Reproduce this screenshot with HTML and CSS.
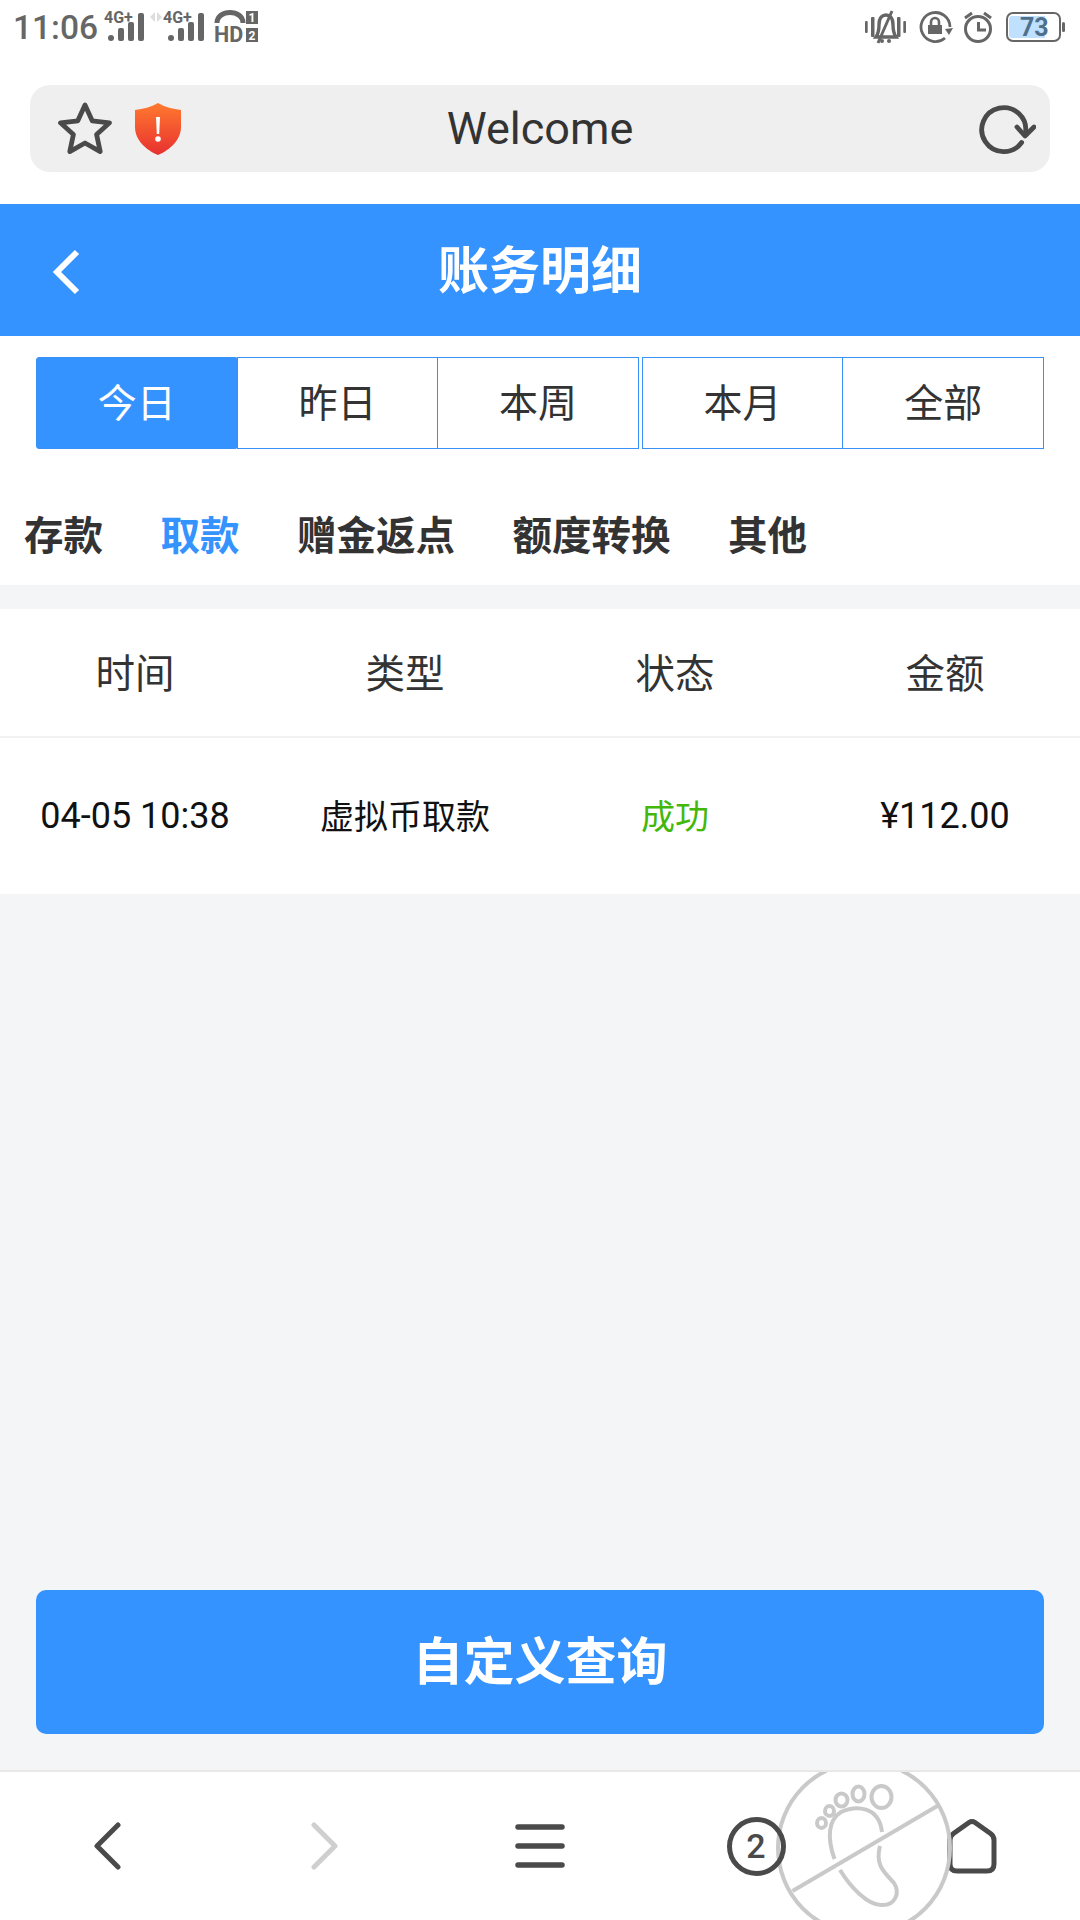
FILE: index.html
```html
<!DOCTYPE html>
<html lang="zh-CN">
<head>
<meta charset="utf-8">
<title>账务明细</title>
<link rel="stylesheet" href="styles.css">
</head>
<body>
<div class="phone">
  <div class="status">
    <div class="status-left">
      <span class="time">11:06</span>
      <svg class="ic ic-net" width="40" height="32" viewBox="0 0 40 32">
        <text x="0" y="13" class="net-t">4G+</text>
        <rect x="4" y="25" width="6" height="6" rx="3" class="g"/>
        <rect x="14" y="18" width="6" height="13" rx="2" class="g"/>
        <rect x="24" y="12" width="6" height="19" rx="2" class="g"/>
        <rect x="34" y="3" width="6" height="28" rx="2" class="g"/>
      </svg>
      <svg class="ic ic-net2" width="54" height="32" viewBox="0 0 54 32">
        <path d="M5 2 L0 7 L5 12Z M7 2 L12 7 L7 12Z" fill="#ddd"/>
        <text x="13" y="13" class="net-t">4G+</text>
        <rect x="18" y="25" width="6" height="6" rx="3" class="g"/>
        <rect x="28" y="18" width="6" height="13" rx="2" class="g"/>
        <rect x="38" y="12" width="6" height="19" rx="2" class="g"/>
        <rect x="48" y="3" width="6" height="28" rx="2" class="g"/>
      </svg>
      <svg class="ic" width="44" height="33" viewBox="0 0 44 33">
        <path d="M2 13 C2 -1 28 -1 28 13" fill="none" stroke="#666" stroke-width="5"/>
        <text x="-1" y="32" class="hd-t">HD</text>
        <rect x="31" y="1" width="12" height="13" class="g"/>
        <rect x="31" y="18" width="12" height="14" class="g"/>
        <text x="37" y="12" class="sim-t">1</text>
        <text x="37" y="30" class="sim-t">2</text>
      </svg>
    </div>
    <div class="status-right">
      <svg width="42" height="34" viewBox="0 0 42 34">
        <rect x="0" y="11" width="2.7" height="12" rx="1" class="g"/>
        <rect x="6" y="7" width="3.5" height="20" rx="1" class="g"/>
        <rect x="32" y="7" width="3.5" height="20" rx="1" class="g"/>
        <rect x="38.3" y="11" width="2.7" height="12" rx="1" class="g"/>
        <path d="M11 27 C13 24 14 20 14 15 C14 7 18 5 21 5 C24 5 28 7 28 15 C28 20 29 24 31 27Z" fill="none" stroke="#666" stroke-width="3.4"/>
        <path d="M13 33 L27 1" stroke="#666" stroke-width="3"/>
        <circle cx="17" cy="31" r="2" class="g"/><circle cx="24" cy="31" r="2" class="g"/>
      </svg>
      <svg width="34" height="34" viewBox="0 0 34 34">
        <path d="M26 28 A14.5 14.5 0 1 1 31 17" fill="none" stroke="#666" stroke-width="2.8"/>
        <path d="M26 19 L34 18 L30 25Z" fill="#666"/>
        <rect x="9" y="15" width="14" height="9" class="g"/>
        <path d="M12 16 V12 a4 4 0 0 1 8 0 V16" fill="none" stroke="#666" stroke-width="2.6"/>
      </svg>
      <svg class="alarm" width="28" height="34" viewBox="0 0 28 34">
        <circle cx="14" cy="19" r="12.5" fill="none" stroke="#666" stroke-width="3"/>
        <path d="M14.5 12 V20 H22" fill="none" stroke="#666" stroke-width="3"/>
        <path d="M1 8 L8 3 M27 8 L20 3" stroke="#666" stroke-width="3"/>
      </svg>
      <div class="battery">
        <div class="battery-body"><span class="battery-fill"></span><span class="battery-num">73</span></div>
        <span class="battery-tip"></span>
      </div>
    </div>
  </div>

  <div class="urlwrap">
    <div class="urlbar">
      <div class="url-left">
        <svg width="54" height="54" viewBox="0 0 54 54"><path d="M27 3 L34.2 18.8 L51.5 20.8 L38.6 32.6 L42.2 49.6 L27 41 L11.8 49.6 L15.4 32.6 L2.5 20.8 L19.8 18.8Z" fill="none" stroke="#4a4a4a" stroke-width="4.8" stroke-linejoin="round"/></svg>
        <svg width="46" height="52" viewBox="0 0 46 52">
          <defs><linearGradient id="sh" x1="0" y1="0" x2="0" y2="1"><stop offset="0" stop-color="#ff7a2f"/><stop offset="1" stop-color="#e83030"/></linearGradient></defs>
          <path d="M23 0 C30 4 38 6 46 7 V24 C46 37 35 47 23 52 C11 47 0 37 0 24 V7 C8 6 16 4 23 0Z" fill="url(#sh)"/>
          <path d="M21 14 H25 L24.2 31 H21.8Z" fill="#fff"/><circle cx="23" cy="36" r="2.8" fill="#fff"/>
        </svg>
      </div>
      <span class="url-title">Welcome</span>
      <svg class="url-reload" width="58" height="52" viewBox="0 0 58 52">
        <path d="M43.6 39.5 A22 22 0 1 1 47.5 30" fill="none" stroke="#4a4a4a" stroke-width="4.8" stroke-linecap="round"/>
        <path d="M39 24 L47 33 L56 24" fill="none" stroke="#4a4a4a" stroke-width="4.8" stroke-linecap="round" stroke-linejoin="round"/>
      </svg>
    </div>
  </div>

  <header class="titlebar">
    <svg class="title-back" width="32" height="48" viewBox="0 0 32 48"><path d="M27 4 L7 24 L27 44" fill="none" stroke="#fff" stroke-width="6"/></svg>
    <h1 class="title">账务明细</h1>
  </header>

  <div class="ranges">
    <div class="range active">今日</div>
    <div class="range">昨日</div>
    <div class="range">本周</div>
    <div class="range gap">本月</div>
    <div class="range">全部</div>
  </div>

  <nav class="cats">
    <span class="cat">存款</span>
    <span class="cat on">取款</span>
    <span class="cat">赠金返点</span>
    <span class="cat">额度转换</span>
    <span class="cat">其他</span>
  </nav>

  <main class="content">
    <div class="table">
      <div class="thead">
        <div>时间</div><div>类型</div><div>状态</div><div>金额</div>
      </div>
      <div class="trow">
        <div class="num">04-05 10:38</div><div class="cjk">虚拟币取款</div><div class="cjk ok">成功</div><div class="num">¥112.00</div>
      </div>
    </div>
    <button class="query">自定义查询</button>
  </main>

  <footer class="bottom">
    <svg width="28" height="48" viewBox="0 0 28 48"><path d="M24 3 L3 24 L24 45" fill="none" stroke="#4a4a4a" stroke-width="5" stroke-linecap="round" stroke-linejoin="round"/></svg>
    <svg width="28" height="48" viewBox="0 0 28 48"><path d="M4 3 L25 24 L4 45" fill="none" stroke="#cfcfcf" stroke-width="5" stroke-linecap="round" stroke-linejoin="round"/></svg>
    <svg width="50" height="46" viewBox="0 0 50 46"><path d="M3 4 H47 M3 23 H47 M3 42 H47" stroke="#4a4a4a" stroke-width="5.5" stroke-linecap="round"/></svg>
    <div class="tabcount">2</div>
    <svg width="50" height="56" viewBox="0 0 50 56"><path d="M22 4.5 Q25 2.5 28 4.5 L43.5 15.5 Q47 18 47 22 V46 Q47 53 40 53 H10 Q3 53 3 46 V22 Q3 18 6.5 15.5Z" fill="none" stroke="#4a4a4a" stroke-width="5" stroke-linejoin="round"/></svg>
    <svg class="foot" width="176" height="176" viewBox="0 0 176 176">
      <g fill="none" stroke="#c9c9c9" stroke-width="4">
        <circle cx="88" cy="88" r="86"/>
        <path d="M16.5 131 L163 45"/>
        <path d="M58.5 99 C51 78 52 60 65 52 C80 45 103 46 106 72"/>
        <path d="M64 110 C75 128 92 145 105 145 C120 146 124 132 118 123 C108 112 99 105 104 86"/>
        <ellipse cx="105.5" cy="37" rx="10" ry="11"/>
        <ellipse cx="82.5" cy="34" rx="6" ry="7.5"/>
        <ellipse cx="65.5" cy="40" rx="6" ry="6.5"/>
        <ellipse cx="53.5" cy="51" rx="4.5" ry="5"/>
        <ellipse cx="45.5" cy="63" rx="4.5" ry="5"/>
      </g>
    </svg>
  </footer>
</div>
</body>
</html>
```
FILE: styles.css
```css
* { box-sizing: border-box; }
html, body { margin: 0; padding: 0; }
body { font-family: Roboto, "Noto Sans CJK SC", sans-serif; background: #fff; }
.phone { width: 1080px; height: 1920px; display: flex; flex-direction: column; overflow: hidden; }

.status { height: 54px; display: flex; justify-content: space-between; align-items: flex-start; padding: 10px 15px 0 13px; }
.status-left { display: flex; align-items: flex-start; }
.status-right { display: flex; align-items: center; gap: 12px; }
.time { font-size: 33.5px; font-weight: 500; line-height: 36px; color: #666; width: 91px; }
.ic { overflow: visible; }
.ic-net { margin-right: 6px; }
.ic-net2 { margin-right: 11px; }
.alarm { margin-left: -1px; margin-right: 2px; }
.net-t { font: 700 16px Roboto, sans-serif; fill: #666; }
.hd-t { font: 700 21.5px Roboto, sans-serif; fill: #666; }
.sim-t { font: 700 12px Roboto, sans-serif; fill: #fff; text-anchor: middle; }
.g { fill: #666; }
.battery { display: flex; align-items: center; gap: 1px; }
.battery-body { position: relative; width: 55px; height: 30px; border: 2px solid #666; border-radius: 7px; display: flex; align-items: center; justify-content: flex-start; overflow: hidden; }
.battery-fill { position: absolute; left: 1px; top: 2px; bottom: 2px; width: 36px; background: #bfe0ff; border-radius: 3px 0 0 3px; }
.battery-num { position: relative; font-size: 25px; font-weight: 700; color: #50708a; line-height: 1; margin-left: 12px; }
.battery-tip { width: 3px; height: 10px; background: #666; border-radius: 2px; }

.urlwrap { height: 150px; padding: 31px 30px 32px; }
.urlbar { position: relative; height: 87px; background: #efefef; border-radius: 20px; display: flex; align-items: center; justify-content: center; }
.url-left { position: absolute; left: 28px; top: 17px; display: flex; align-items: center; gap: 23px; }
.url-title { font-size: 45px; color: #333; }
.url-reload { position: absolute; right: 14px; top: 18px; }

.titlebar { position: relative; height: 132px; padding-bottom: 7px; background: #3593ff; display: flex; align-items: center; justify-content: center; }
.title { margin: 0; font-size: 51px; font-weight: 700; color: #fff; }
.title-back { position: absolute; left: 50px; top: 44px; }

.ranges { display: flex; height: 92px; margin: 21px 36px 0; }
.range { width: 202.4px; border: 1px solid #3a91f5; margin-left: -1px; padding-bottom: 7px; display: flex; align-items: center; justify-content: center; font-size: 39px; color: #333; }
.range:first-child { margin-left: 0; }
.range.gap { margin-left: 3px; }
.range.active { background: #3593ff; color: #fff; border-radius: 3px; }

.cats { height: 136px; display: flex; align-items: center; gap: 57.5px; padding: 31px 24px 0; }
.cat { font-size: 39.5px; font-weight: 700; color: #333; }
.cat.on { color: #3593ff; }

.content { flex: 1; position: relative; background: #f4f5f7; padding-top: 24px; display: flex; flex-direction: column; }
.table { background: #fff; }
.thead, .trow { display: grid; grid-template-columns: repeat(4, 270px); text-align: center; align-items: center; }
.thead { height: 129px; padding-bottom: 4px; border-bottom: 2px solid #f0f1f3; font-size: 39.5px; color: #333; }
.trow { height: 156px; font-size: 34px; color: #111; }
.trow .num { font-size: 36px; }
.trow .cjk { padding-bottom: 4px; }
.trow .ok { color: #44b80a; }
.query { margin: auto 36px 36px; height: 144px; padding: 0 0 9px; background: #3593ff; color: #fff; border: 0; border-radius: 10px; font: 700 51px Roboto, "Noto Sans CJK SC", sans-serif; }

.bottom { position: relative; height: 150px; border-top: 2px solid #e8e8e8; background: #fff; overflow: hidden; display: grid; grid-template-columns: repeat(5, 216px); justify-items: center; align-items: center; }
.tabcount { width: 59px; height: 59px; border: 5px solid #4a4a4a; border-radius: 50%; display: flex; align-items: center; justify-content: center; font-size: 34px; font-weight: 500; color: #4a4a4a; position: relative; z-index: 1; }
.foot { position: absolute; left: 775.5px; top: -12px; }
```
